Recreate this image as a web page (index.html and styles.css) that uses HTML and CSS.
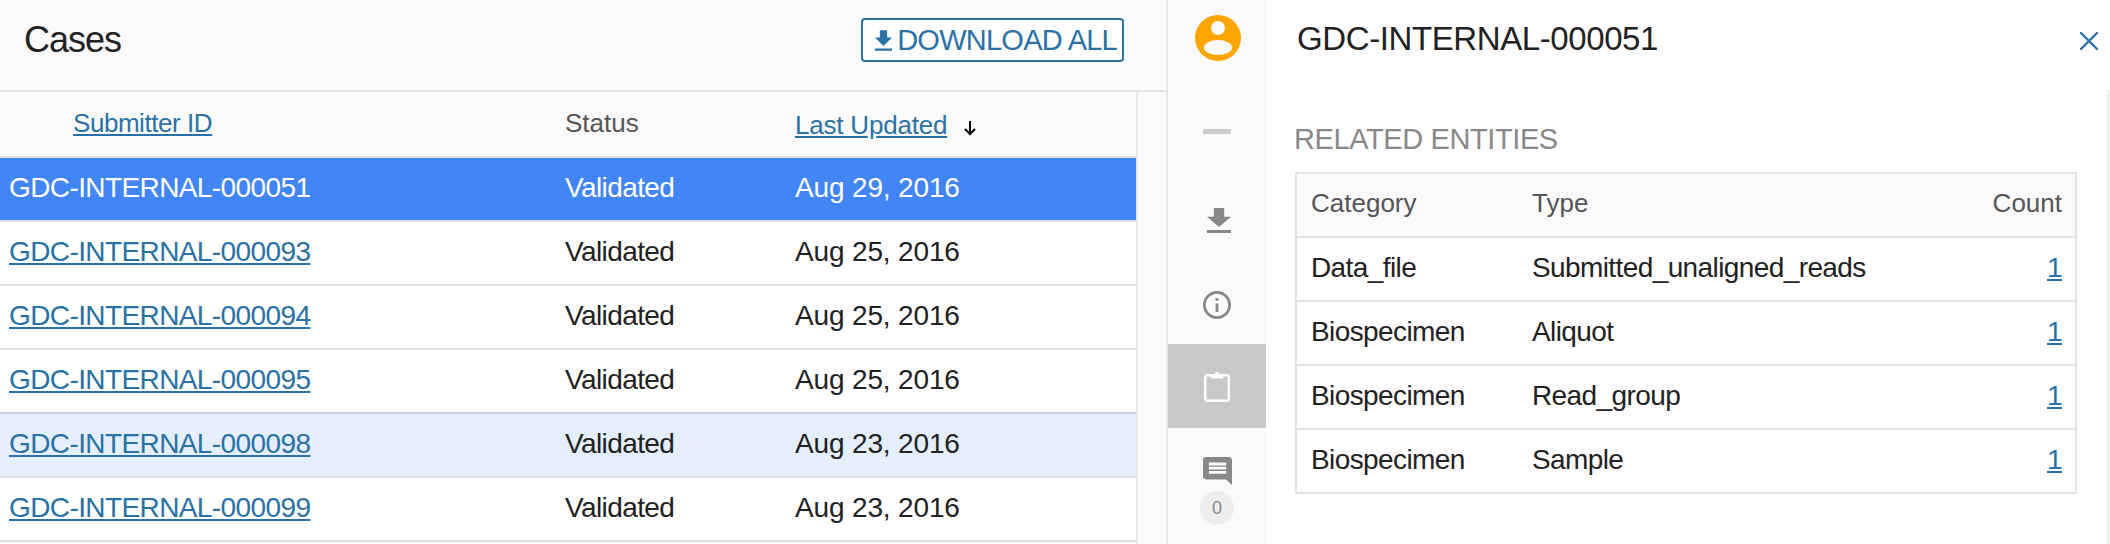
FILE: index.html
```html
<!DOCTYPE html>
<html lang="en">
<head>
    <meta charset="UTF-8">
    <title>Cases</title>
    <link rel="stylesheet" href="styles.css">
</head>
<body>
    <div class="page">
        <div class="cases">
            <header class="cases-header">
                <h1>Cases</h1>
                <a class="download-all" href="#">
                    <svg viewBox="5 3 14 17" width="17" height="21"><path d="M19 9h-4V3H9v6H5l7 7 7-7zM5 18v2h14v-2H5z"/></svg>
                    DOWNLOAD ALL
                </a>
            </header>
            <div class="cases-body">
                <table class="cases-table">
                    <thead>
                        <tr>
                            <th class="col-id"><a href="#">Submitter ID</a></th>
                            <th class="col-status">Status</th>
                            <th class="col-date">
                                <a href="#">Last Updated</a>
                                <svg class="sort" viewBox="0 0 16 16" width="16" height="16"><path d="M8 1v13M3 9l5 5 5-5" fill="none" stroke="#000" stroke-width="2"/></svg>
                            </th>
                        </tr>
                    </thead>
                    <tbody>
                        <tr class="selected"><td>GDC-INTERNAL-000051</td><td>Validated</td><td>Aug 29, 2016</td></tr>
                        <tr><td><a href="#">GDC-INTERNAL-000093</a></td><td>Validated</td><td>Aug 25, 2016</td></tr>
                        <tr><td><a href="#">GDC-INTERNAL-000094</a></td><td>Validated</td><td>Aug 25, 2016</td></tr>
                        <tr class="before-hover"><td><a href="#">GDC-INTERNAL-000095</a></td><td>Validated</td><td>Aug 25, 2016</td></tr>
                        <tr class="hover"><td><a href="#">GDC-INTERNAL-000098</a></td><td>Validated</td><td>Aug 23, 2016</td></tr>
                        <tr><td><a href="#">GDC-INTERNAL-000099</a></td><td>Validated</td><td>Aug 23, 2016</td></tr>
                    </tbody>
                </table>
                <div class="scroll-track"></div>
            </div>
        </div>

        <nav class="sidebar">
            <div class="side-avatar">
                <svg viewBox="0 0 46 46" width="46" height="46">
                    <circle cx="23" cy="23" r="23" fill="#ffa500"/>
                    <circle cx="23" cy="13" r="7" fill="#fafafa"/>
                    <ellipse cx="23" cy="32.5" rx="14" ry="7.5" fill="#fafafa"/>
                </svg>
            </div>
            <div class="side-item side-dash"><span class="dash"></span></div>
            <div class="side-item side-download">
                <svg viewBox="5 3 14 17" width="24" height="25" preserveAspectRatio="none"><path fill="#888" d="M19 9h-4V3H9v6H5l7 7 7-7zM5 18v2h14v-2H5z"/></svg>
            </div>
            <div class="side-item side-info">
                <svg viewBox="2 2 20 20" width="28" height="28"><path fill="#888" d="M11 17h2v-6h-2v6zm1-15C6.48 2 2 6.48 2 12s4.48 10 10 10 10-4.48 10-10S17.52 2 12 2zm0 18c-4.41 0-8-3.59-8-8s3.59-8 8-8 8 3.59 8 8-3.59 8-8 8zm-1-11h2V7h-2v2z"/></svg>
            </div>
            <div class="side-item active">
                <svg viewBox="0 0 26 31" width="26" height="31">
                    <rect x="1.2" y="4.2" width="23.6" height="25.6" rx="2" fill="none" stroke="#fff" stroke-width="2.4"/>
                    <path fill="#fff" d="M7 3h3.2a3 3 0 0 1 5.6 0H19v4.5H7z"/>
                </svg>
            </div>
            <div class="side-comments">
                <svg viewBox="2 2 20 20" width="29" height="28" preserveAspectRatio="none"><path fill="#888" d="M21.99 4c0-1.1-.89-2-1.99-2H4c-1.1 0-2 .9-2 2v12c0 1.1.9 2 2 2h14l4 4-.01-18zM18 14H6v-2h12v2zm0-3H6V9h12v2zm0-3H6V6h12v2z"/></svg>
                <span class="badge">0</span>
            </div>
        </nav>

        <main class="detail">
            <div class="detail-head">
                <h2>GDC-INTERNAL-000051</h2>
                <a class="close" href="#">
                    <svg viewBox="0 0 20 20" width="20" height="20"><path d="M2 2l16 16M18 2L2 18" fill="none" stroke="#2a72a5" stroke-width="2.4" stroke-linecap="round"/></svg>
                </a>
            </div>
            <div class="detail-body">
                <h3>RELATED ENTITIES</h3>
                <table class="entities">
                    <thead>
                        <tr><th>Category</th><th>Type</th><th class="count">Count</th></tr>
                    </thead>
                    <tbody>
                        <tr><td>Data_file</td><td>Submitted_unaligned_reads</td><td class="count"><a href="#">1</a></td></tr>
                        <tr><td>Biospecimen</td><td>Aliquot</td><td class="count"><a href="#">1</a></td></tr>
                        <tr><td>Biospecimen</td><td>Read_group</td><td class="count"><a href="#">1</a></td></tr>
                        <tr><td>Biospecimen</td><td>Sample</td><td class="count"><a href="#">1</a></td></tr>
                    </tbody>
                </table>
            </div>
        </main>
    </div>
</body>
</html>
```

FILE: styles.css
```css
html, body {
    margin: 0;
    padding: 0;
    height: 544px;
    overflow: hidden;
    background: #fff;
}
body {
    font-family: "Liberation Sans", Arial, sans-serif;
    font-size: 28px;
    letter-spacing: -0.6px;
    color: #222;
}
a {
    color: #2a72a5;
}
h1, h2, h3 {
    margin: 0;
    font-weight: normal;
}
.page {
    display: flex;
    height: 544px;
}

/* left panel */
.cases {
    width: 1166px;
    flex: none;
    border-right: 2px solid #e8e8e8;
    overflow: hidden;
}
.cases-header {
    box-sizing: border-box;
    height: 92px;
    background: #fafafa;
    border-bottom: 2px solid #e4e4e4;
    display: flex;
    align-items: center;
    justify-content: space-between;
    padding: 0 42px 10px 24px;
}
.cases-header h1 {
    font-size: 36px;
    letter-spacing: -1px;
    color: #222;
}
.download-all {
    display: flex;
    align-items: center;
    gap: 5px;
    height: 40px;
    padding: 0 5px 0 12px;
    border: 2px solid #2a72a5;
    border-radius: 4px;
    background: #fff;
    font-size: 29px;
    letter-spacing: -0.75px;
    text-decoration: none;
}
.download-all svg {
    fill: #2a72a5;
}
.cases-body {
    display: flex;
    height: 452px;
    background: #fafafa;
}
.cases-table {
    width: 1136px;
    flex: none;
    align-self: flex-start;
    table-layout: fixed;
    border-collapse: separate;
    border-spacing: 0;
    background: #fff;
}
.cases-table th {
    box-sizing: border-box;
    height: 66px;
    padding: 0 0 2px;
    background: #fafafa;
    border-bottom: 2px solid #e4e4e4;
    font-weight: normal;
    font-size: 26px;
    letter-spacing: -0.45px;
    text-align: left;
    color: #555;
}
.cases-table td {
    box-sizing: border-box;
    height: 64px;
    padding: 0 0 2px;
    border-bottom: 2px solid #e0e0e0;
}
.cases-table td:last-child {
    letter-spacing: -0.15px;
}
.col-id {
    width: 565px;
}
.cases-table .col-status {
    width: 230px;
    letter-spacing: 0;
}
.col-id a {
    margin-left: 73px;
}
.col-date a {
    position: relative;
    top: 2px;
    letter-spacing: -0.2px;
}
.sort {
    position: relative;
    top: 4px;
    margin-left: 8px;
}
.cases-table td:first-child {
    padding-left: 9px;
}
.selected td {
    background: #4285f4;
    color: #fff;
}
.before-hover td {
    border-bottom-color: #c5d0e0;
}
.hover td {
    background: #e4eefd;
}
.scroll-track {
    flex: 1;
    border-left: 2px solid #e8e8e8;
}

/* icon column */
.sidebar {
    width: 98px;
    flex: none;
    background: #fafafa;
    display: flex;
    flex-direction: column;
    align-items: stretch;
}
.side-avatar {
    height: 77px;
    padding-top: 15px;
    padding-left: 27px;
}
.side-item {
    box-sizing: border-box;
    display: flex;
    align-items: center;
    justify-content: center;
    height: 84px;
}
.side-dash {
    height: 78px;
}
.side-download {
    height: 90px;
    padding-top: 10px;
    padding-left: 3px;
}
.side-info {
    padding-top: 6px;
}
.dash {
    width: 28px;
    height: 5px;
    background: #ccc;
}
.active {
    background: #c8c8c8;
}
.side-comments {
    display: flex;
    flex-direction: column;
    align-items: center;
    padding-top: 29px;
    gap: 6px;
}
.badge {
    width: 34px;
    height: 34px;
    border-radius: 50%;
    background: #eee;
    color: #888;
    font-size: 18px;
    letter-spacing: 0;
    line-height: 34px;
    text-align: center;
}

/* detail panel */
.detail {
    flex: 1;
    min-width: 0;
    padding-left: 29px;
}
.detail-head {
    box-sizing: border-box;
    height: 90px;
    display: flex;
    justify-content: space-between;
    align-items: center;
    padding: 0 11px 12px 0;
}
.detail-head h2 {
    font-size: 33px;
    letter-spacing: -0.4px;
    margin-left: 2px;
}
.close {
    display: block;
    line-height: 0;
    margin-top: 4px;
}
.detail-body {
    height: 454px;
    border-right: 3px solid #eee;
}
.detail-body h3 {
    box-sizing: border-box;
    height: 82px;
    padding-top: 33px;
    margin-left: -1px;
    font-size: 29px;
    line-height: 32px;
    letter-spacing: -0.4px;
    color: #888;
}
.entities {
    width: 782px;
    table-layout: fixed;
    border-collapse: separate;
    border-spacing: 0;
    border: 2px solid #e4e4e4;
}
.entities th, .entities td {
    box-sizing: border-box;
    height: 64px;
    padding: 0 13px 2px 14px;
    border-bottom: 2px solid #e4e4e4;
    text-align: left;
    font-weight: normal;
}
.entities tbody tr:last-child td {
    border-bottom: 0;
    height: 62px;
}
.entities th {
    padding-bottom: 4px;
    background: #fafafa;
    color: #555;
    font-size: 26px;
    letter-spacing: 0;
}
.entities th:first-child {
    width: 221px;
}
.entities th:nth-child(2) {
    width: 400px;
}
.entities .count {
    text-align: right;
}
```
